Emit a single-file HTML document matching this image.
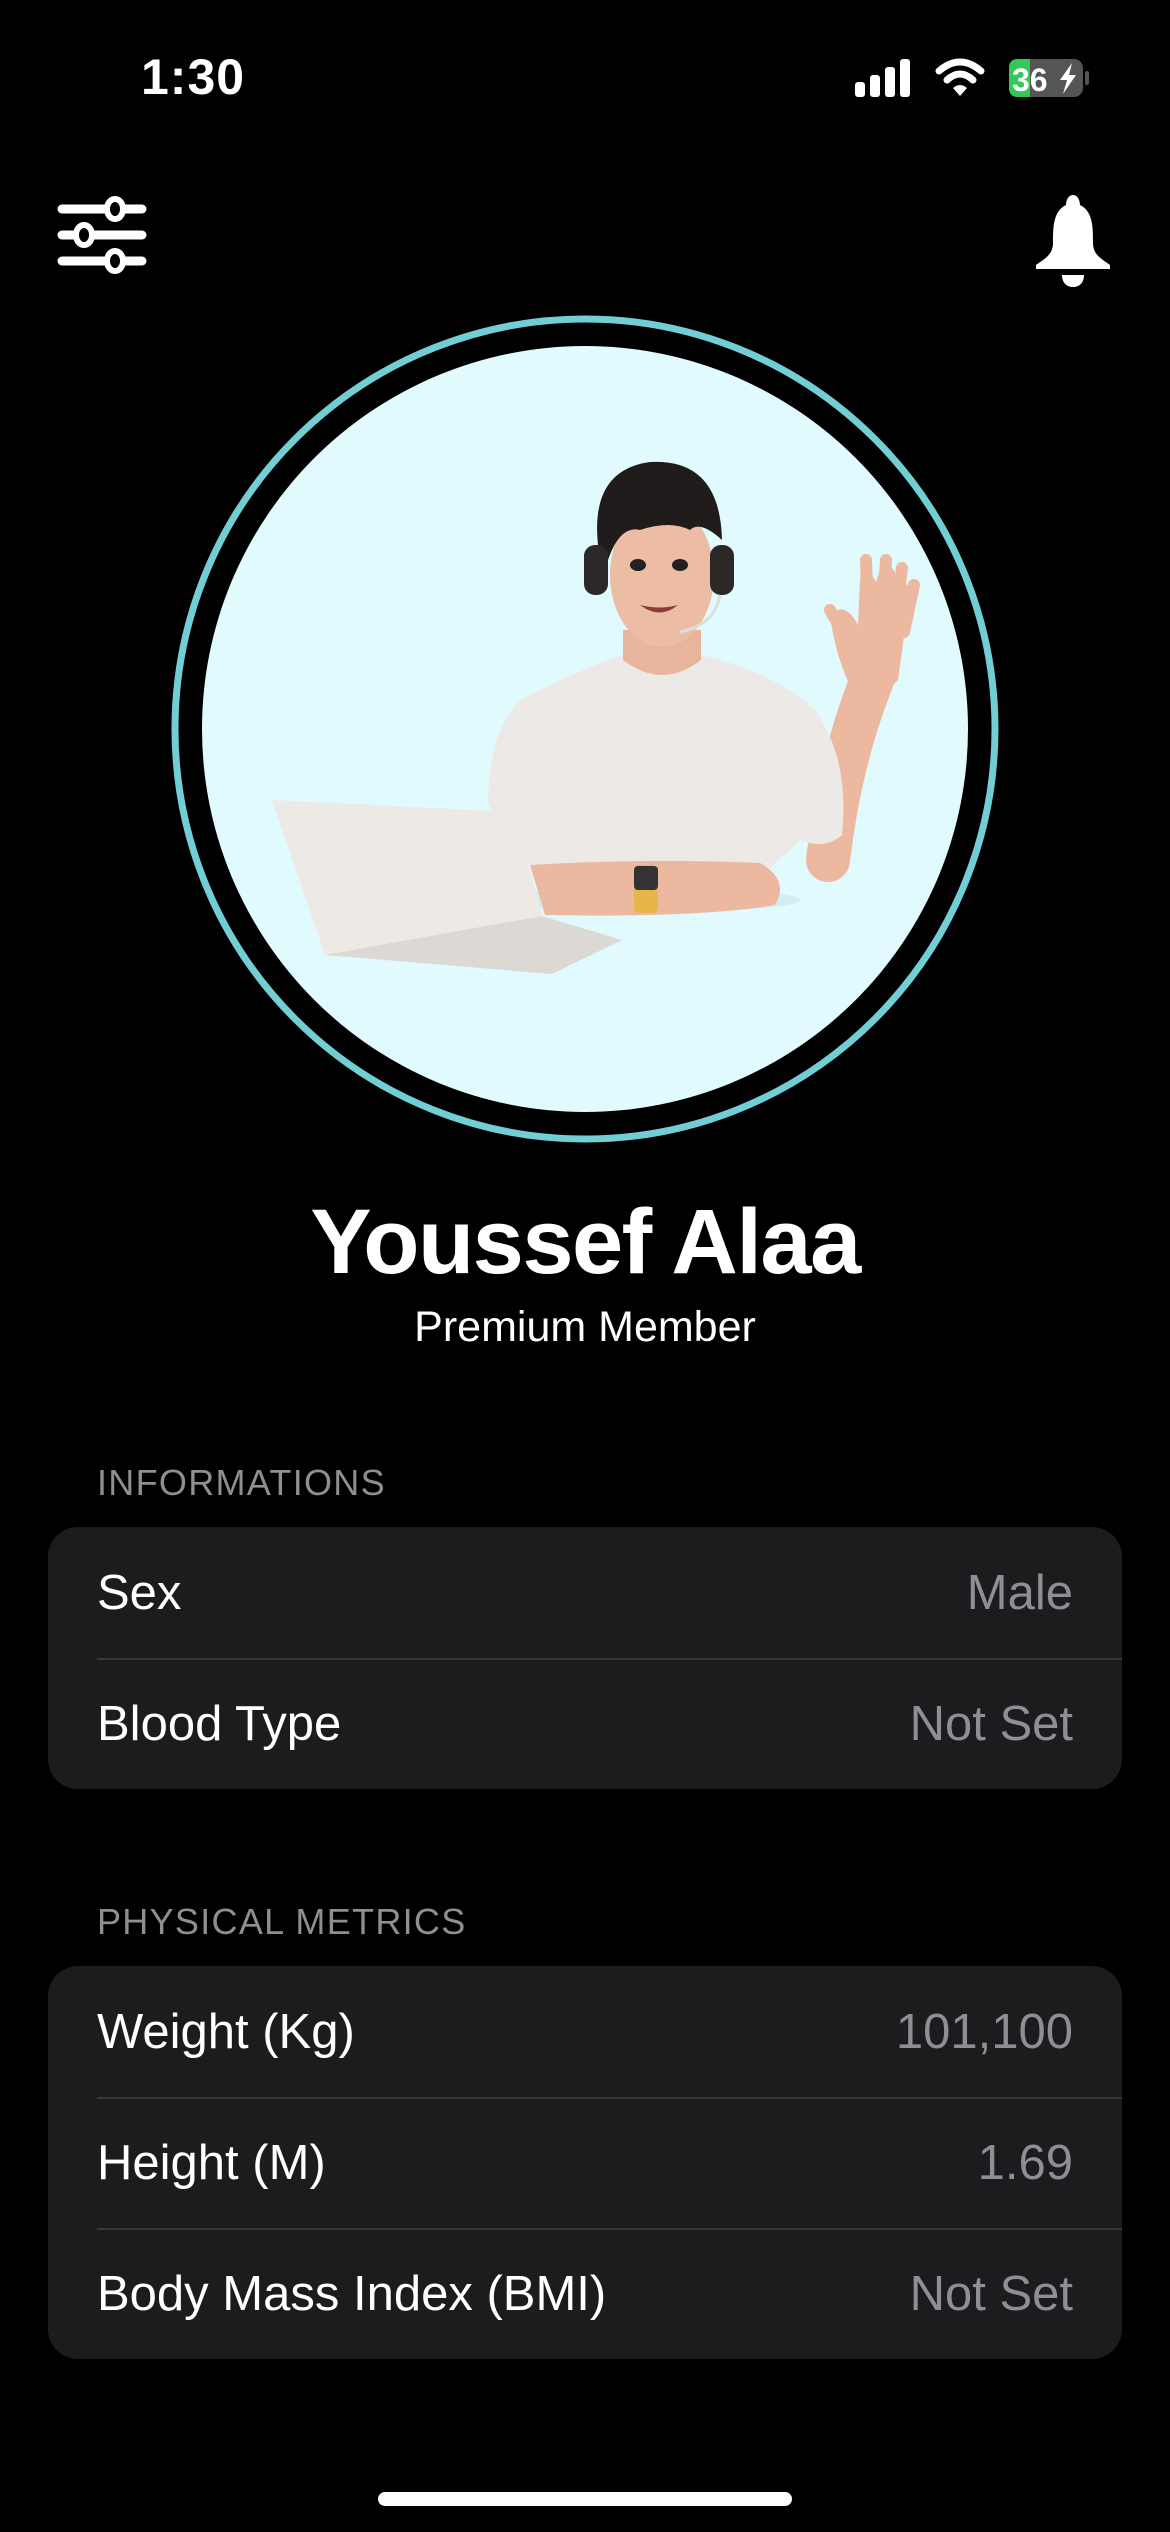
<!DOCTYPE html>
<html><head><meta charset="utf-8"><style>
*{margin:0;padding:0;box-sizing:border-box}
body{width:1170px;height:2532px;background:#000;position:relative;overflow:hidden;font-family:"Liberation Sans",sans-serif;color:#fff}
.abs{position:absolute}
.sec{position:absolute;left:97px;font-size:36px;color:#8e8e93;letter-spacing:1.3px}
.card{position:absolute;left:48px;width:1074px;background:#1c1c1e;border-radius:30px;overflow:hidden}
.row{height:131px;position:relative;font-size:49px;display:flex;align-items:center;justify-content:space-between;padding:0 49px 0 49px}
.row .v{color:#8e8e93}
.row+.row:before{content:"";position:absolute;left:49px;right:0;top:0;height:2px;background:#38383a}
</style></head><body>
<div class="abs" style="left:141px;top:48px;font-size:50px;font-weight:bold;letter-spacing:1px">1:30</div>
<svg class="abs" style="left:850px;top:55px" width="250" height="50" viewBox="0 0 250 50">
<rect x="5" y="27" width="10" height="15" rx="3" fill="#fff"/>
<rect x="20" y="20" width="10" height="22" rx="3" fill="#fff"/>
<rect x="35" y="12" width="10" height="30" rx="3" fill="#fff"/>
<rect x="50" y="4" width="10" height="38" rx="3" fill="#fff"/>
<path d="M89 16 Q110 -2 131 16" stroke="#fff" stroke-width="7" fill="none" stroke-linecap="round"/>
<path d="M97 25 Q110 13 123 25" stroke="#fff" stroke-width="7" fill="none" stroke-linecap="round"/>
<path d="M103 33 L110 41 L117 33 Q110 27 103 33Z" fill="#fff"/>
<rect x="159" y="4" width="74" height="38" rx="9" fill="#555"/>
<path d="M168 4 H180 V42 H168 Q159 42 159 33 V13 Q159 4 168 4Z" fill="#34c759"/>
<rect x="235" y="16" width="4" height="14" rx="2" fill="#555"/>
<text x="162" y="36" font-size="32" font-weight="bold" fill="#fff" font-family="Liberation Sans">36</text>
<path d="M222 8 L210 25 H217 L213 39 L226 20 H219Z" fill="#fff"/>
</svg>
<svg class="abs" style="left:56px;top:195px" width="94" height="80" viewBox="0 0 94 80">
<g stroke="#fff" stroke-width="9" stroke-linecap="round"><line x1="6" y1="14" x2="86" y2="14"/><line x1="6" y1="40" x2="86" y2="40"/><line x1="6" y1="66" x2="86" y2="66"/></g>
<g fill="#000" stroke="#fff" stroke-width="6"><ellipse cx="59" cy="14" rx="8" ry="10"/><ellipse cx="28" cy="40" rx="8" ry="10"/><ellipse cx="59" cy="66" rx="8" ry="10"/></g>
</svg>
<svg class="abs" style="left:1030px;top:193px" width="86" height="94" viewBox="0 0 86 94">
<path d="M43 2 C48 2 50 8 50 12 C63 18 63 35 63 50 C63 62 72 66 80 72 V76 H6 V72 C14 66 23 62 23 50 C23 35 23 18 36 12 C36 8 38 2 43 2Z" fill="#fff"/>
<path d="M32 82 H54 C54 90 49 94 43 94 C37 94 32 90 32 82Z" fill="#fff"/>
</svg>
<svg class="abs" style="left:0;top:0" width="1170" height="1150" viewBox="0 0 1170 1150">
<circle cx="585" cy="729" r="410" fill="none" stroke="#72ced5" stroke-width="7"/>
<circle cx="585" cy="729" r="383" fill="#e0fafd"/>
<ellipse cx="650" cy="900" rx="150" ry="12" fill="#cfeff3"/>
<path d="M828 860 Q840 760 872 680" stroke="#ecb9a0" stroke-width="44" fill="none" stroke-linecap="round"/>
<path d="M852 690 Q835 655 830 615 Q845 600 858 625 L860 580 Q868 565 876 582 L880 570 Q890 560 896 575 L898 585 Q906 578 910 592 L898 680 Q880 700 852 690Z" fill="#ecb9a0"/>
<g stroke="#ecb9a0" stroke-width="12" stroke-linecap="round"><line x1="868" y1="620" x2="866" y2="560"/><line x1="882" y1="620" x2="886" y2="560"/><line x1="895" y1="625" x2="902" y2="568"/><line x1="904" y1="632" x2="914" y2="585"/><line x1="850" y1="645" x2="830" y2="610"/></g>
<path d="M520 700 Q600 660 625 655 Q660 675 700 655 Q770 670 815 710 Q850 760 842 835 Q825 850 800 840 L770 868 L540 870 Q500 850 488 800 Q490 730 520 700Z" fill="#ede9e6"/>
<path d="M623 630 H701 V660 Q662 690 623 660Z" fill="#e8b59c"/>
<path d="M530 865 Q640 858 760 863 Q790 880 775 905 Q700 918 545 915 Z" fill="#ecb9a0"/>
<rect x="634" y="865" width="24" height="48" rx="5" fill="#e8b54a"/>
<rect x="634" y="866" width="24" height="24" rx="4" fill="#333"/>
<ellipse cx="662" cy="575" rx="52" ry="72" fill="#ecbca4"/>
<path d="M598 545 Q590 470 650 462 Q720 458 722 540 Q700 520 690 530 Q670 520 640 530 Q620 525 608 560 Z" fill="#1f1c1b"/>
<rect x="584" y="545" width="24" height="50" rx="11" fill="#2b2827"/>
<rect x="710" y="545" width="24" height="50" rx="11" fill="#2b2827"/>
<ellipse cx="638" cy="565" rx="8" ry="6" fill="#222"/><ellipse cx="680" cy="565" rx="8" ry="6" fill="#222"/>
<path d="M640 605 Q660 620 678 605 Q660 610 640 605Z" fill="#8a3b3b"/>
<path d="M720 595 Q715 625 680 632" stroke="#ddd" stroke-width="3" fill="none"/>
<path d="M272 800 L515 812 L542 916 L325 955 Z" fill="#ede9e5"/>
<path d="M325 955 L542 916 L622 940 L552 974 Z" fill="#dcd8d4"/>
</svg>
<div class="abs" style="left:0;width:1170px;top:1190px;text-align:center;font-size:92px;font-weight:bold;letter-spacing:-1.5px">Youssef Alaa</div>
<div class="abs" style="left:0;width:1170px;top:1303px;text-align:center;font-size:43px">Premium Member</div>
<div class="sec" style="top:1462px">INFORMATIONS</div>
<div class="card" style="top:1527px"><div class="row"><span>Sex</span><span class="v">Male</span></div><div class="row"><span>Blood Type</span><span class="v">Not Set</span></div></div>
<div class="sec" style="top:1901px">PHYSICAL METRICS</div>
<div class="card" style="top:1966px"><div class="row"><span>Weight (Kg)</span><span class="v">101,100</span></div><div class="row"><span>Height (M)</span><span class="v">1.69</span></div><div class="row"><span>Body Mass Index (BMI)</span><span class="v">Not Set</span></div></div>
<div class="abs" style="left:378px;top:2492px;width:414px;height:14px;border-radius:7px;background:#fff"></div>
</body></html>
